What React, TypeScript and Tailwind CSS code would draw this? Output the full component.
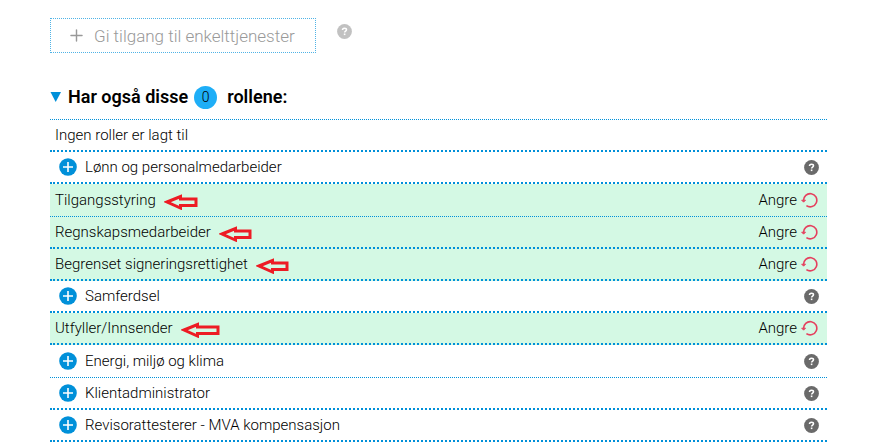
import { Plus } from "lucide-react";

type Role = {
    name: string;
    added?: boolean;
    thin?: boolean;
    arrow?: "sm" | "md" | "lg";
};

const roles: Role[] = [
    { name: "Lønn og personalmedarbeider" },
    { name: "Tilgangsstyring", added: true, thin: true, arrow: "md" },
    { name: "Regnskapsmedarbeider", added: true, arrow: "sm" },
    { name: "Begrenset signeringsrettighet", added: true, arrow: "sm" },
    { name: "Samferdsel" },
    { name: "Utfyller/Innsender", added: true, arrow: "lg" },
    { name: "Energi, miljø og klima", thin: true },
    { name: "Klientadministrator" },
    { name: "Revisorattesterer - MVA kompensasjon" },
];

const arrowWidths = { sm: 33, md: 34, lg: 39 };

const HelpIcon = ({ color }: { color: string }) => (
    <svg width="15" height="15" viewBox="0 0 15 15" aria-hidden="true">
        <circle cx="7.5" cy="7.5" r="7.4" fill={color} />
        <path d="M5.5 6.1c0-1.2.8-1.9 2-1.9s2 .7 2 1.6c0 1.3-1.9 1.3-1.9 2.8" fill="none" stroke="#fff" strokeWidth="1.5" />
        <rect x="6.8" y="9.5" width="1.6" height="1.6" fill="#fff" />
    </svg>
);

const AddIcon = () => (
    <svg width="18" height="18" viewBox="0 0 18 18" aria-hidden="true">
        <circle cx="9" cy="9" r="8.8" fill="#0090d9" />
        <path d="M9 4v10M4 9h10" stroke="#fff" strokeWidth="1.6" />
    </svg>
);

const UndoIcon = () => (
    <svg width="17" height="16" viewBox="0 0 17 16" fill="none" stroke="#e5405e" strokeWidth="1.6" aria-hidden="true">
        <path d="M2.6 8.6A6.6 6.6 0 1 1 5.4 13.6" />
        <path d="M.6 8.2h4L2.6 10.2z" fill="#e5405e" strokeWidth=".8" />
    </svg>
);

const Arrow = ({ size }: { size: "sm" | "md" | "lg" }) => {
    const w = arrowWidths[size];
    return (
        <svg width={w} height="16" viewBox={`0 0 ${w} 16`} aria-hidden="true">
            <path
                d={`M3 8L16.5 2.5V5H${w - 2}V11.5H16.5V14z`}
                fill="none"
                stroke="#ed1c24"
                strokeWidth="3"
            />
        </svg>
    );
};

const RoleRow = ({ role }: { role: Role }) => (
    <li
        className={`flex items-center border-dotted border-[#0090d9]
      ${role.thin ? "h-[33px] border-b" : "h-8 border-b-2"}
      ${role.added ? "bg-[#d4f9e4] pl-[5px] pr-[9px]" : "pl-[9px] pr-2"}
    `}
    >
        {role.added ? (
            <>
                <span>{role.name}</span>
                {role.arrow && <span className="ml-2 mt-1"><Arrow size={role.arrow} /></span>}
                <button className="ml-auto flex items-center gap-1">
                    Angre <UndoIcon />
                </button>
            </>
        ) : (
            <>
                <button className="flex items-center gap-2">
                    <AddIcon />
                    {role.name}
                </button>
                <button className="ml-auto" aria-label={`Hjelp: ${role.name}`}>
                    <HelpIcon color="#6a6a6a" />
                </button>
            </>
        )}
    </li>
);

export default function App() {
    return (
        <main className="bg-white pl-[50px] pr-[47px] pt-[18px] font-['Roboto',sans-serif] text-[15px] leading-5 font-light text-black">
            <div className="flex items-start gap-[21px]">
                <button disabled className="flex h-[35px] items-center gap-2 border border-dotted border-[#4fb3e6] pl-4 pr-5 text-[17px] text-[#999]">
                    <Plus size={19} strokeWidth={1.8} />
                    Gi tilgang til enkelttjenester
                </button>
                <button className="mt-[6px]" aria-label="Hjelp">
                    <HelpIcon color="#c1c1c1" />
                </button>
            </div>

            <section className="mt-8">
                <h2>
                    <button className="flex h-6 items-center text-[18px] font-semibold">
                        <svg width="11" height="10" viewBox="0 0 11 10" className="mr-[7px]" aria-hidden="true">
                            <path d="M.5 0h10.5L5.7 10z" fill="#0090d9" />
                        </svg>
                        Har også disse
                        <span className="ml-[6px] mr-[10px] flex size-[23px] items-center justify-center rounded-full bg-[#1eaef7] text-[14px] font-light">0</span>
                        rollene:
                    </button>
                </h2>
                <ul className="mt-[10px] border-t border-dotted border-[#0090d9]">
                    <li className="flex h-8 items-center border-b-2 border-dotted border-[#0090d9] pl-[5px]">Ingen roller er lagt til</li>
                    {roles.map((role) => (
                        <RoleRow key={role.name} role={role} />
                    ))}
                </ul>
            </section>
        </main>
    );
}
